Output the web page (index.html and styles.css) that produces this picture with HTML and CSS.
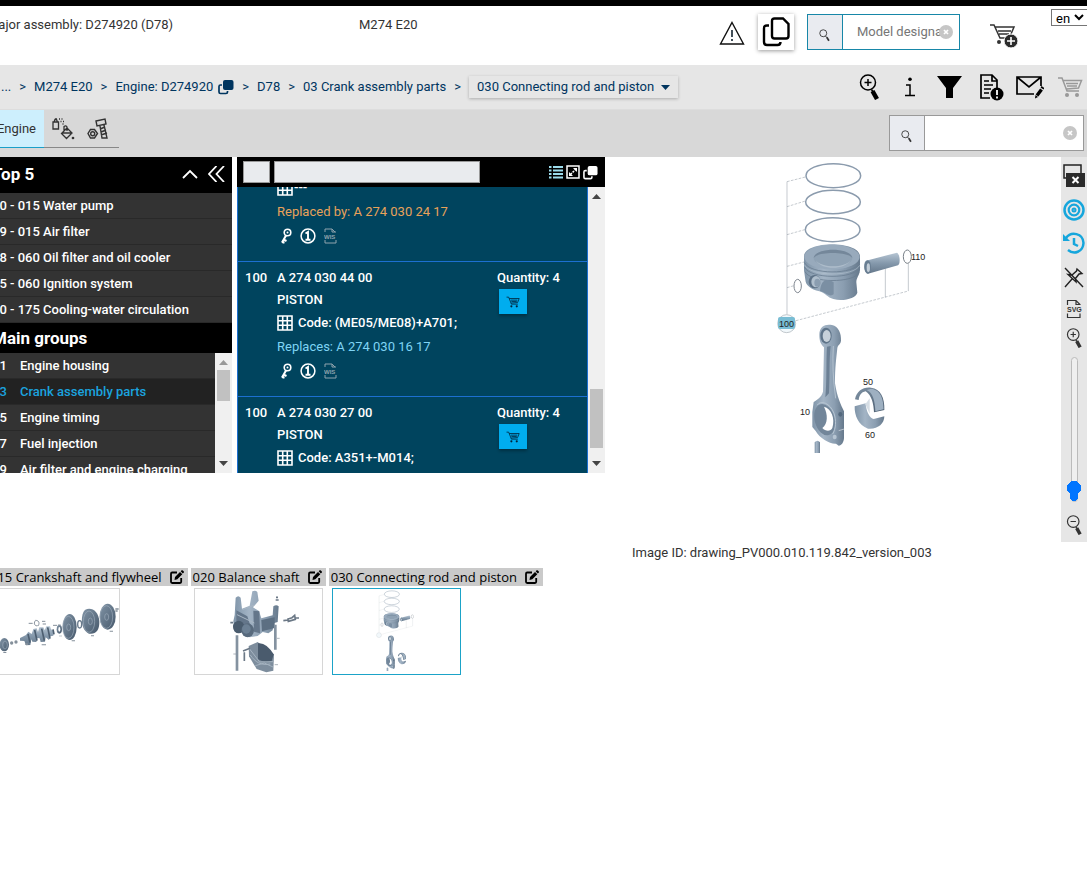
FILE: index.html
```html
<!DOCTYPE html>
<html lang="en">
<head>
<meta charset="utf-8">
<title>Parts catalogue</title>
<link rel="stylesheet" href="styles.css">
</head>
<body>
<svg class="defs" aria-hidden="true">
  <defs>
    <linearGradient id="steel" x1="0" x2="1" y1="0" y2="0"><stop offset="0" stop-color="#7f94a8"/><stop offset=".35" stop-color="#a3b4c5"/><stop offset=".7" stop-color="#8b9eb1"/><stop offset="1" stop-color="#66798c"/></linearGradient>
    <linearGradient id="steelV" x1="0" x2="0" y1="0" y2="1"><stop offset="0" stop-color="#b7c6d4"/><stop offset=".5" stop-color="#8599ac"/><stop offset="1" stop-color="#64778a"/></linearGradient>
    <linearGradient id="dark" x1="0" x2="1" y1="0" y2="1"><stop offset="0" stop-color="#8194a6"/><stop offset="1" stop-color="#46586b"/></linearGradient>
  </defs>
  <symbol id="copy" viewBox="0 0 16 16"><path d="M4 6H2.500Q1 6 1 7.500V13Q1 14.500 2.500 14.500H8Q9.500 14.500 9.500 13V12" fill="none" stroke="currentColor" stroke-width="1.700"/><rect x="5" y="1" width="10.500" height="10" rx="2" fill="currentColor"/></symbol>
  <symbol id="lens" viewBox="0 0 16 16"><circle cx="6" cy="6" r="4" fill="none" stroke="currentColor"/><path d="M8.500 9l1.500 2" stroke="currentColor"/><path d="M10 10.500l2.500 4" stroke="currentColor" stroke-width="2"/></symbol>
  <symbol id="zoomin" viewBox="0 0 20 26"><circle cx="9" cy="8.500" r="7.500" fill="none" stroke="currentColor" stroke-width="1.500"/><path d="M5.500 8.500h7M9 5v7M12.500 15.500l2 3" fill="none" stroke="currentColor" stroke-width="1.500"/><path d="M13.500 17l4.500 8" stroke="currentColor" stroke-width="4.500"/></symbol>
  <symbol id="zoomout" viewBox="0 0 20 26"><circle cx="9" cy="8.500" r="7.500" fill="none" stroke="currentColor" stroke-width="1.500"/><path d="M5.500 8.500h7M12.500 15.500l2 3" fill="none" stroke="currentColor" stroke-width="1.500"/><path d="M13.500 17l4.500 8" stroke="currentColor" stroke-width="4.500"/></symbol>
  <symbol id="cart" viewBox="0 0 26 22"><path d="M1 2h4l5 13h12M6 4.500h18.500l-3 7.500-12 1M9 7.500h12M10 10h10" fill="none" stroke="currentColor" stroke-width="1.500"/><circle cx="10" cy="19" r="2" fill="currentColor"/><circle cx="20" cy="19" r="2" fill="currentColor"/></symbol>
  <symbol id="grid" viewBox="0 0 16 16"><path d="M1 1h14v14H1zM1 5.700h14M1 10.300h14M5.700 1v14M10.300 1v14" fill="none" stroke="currentColor" stroke-width="1.600"/></symbol>
  <symbol id="key" viewBox="0 0 12 16"><circle cx="7.500" cy="4.500" r="3.300" fill="none" stroke="currentColor" stroke-width="1.600"/><circle cx="7.500" cy="4.500" r="1" fill="currentColor"/><path d="M6 7.500L2 14.500M3.500 11.500l3 1.500M2 14l2.500.700" fill="none" stroke="currentColor" stroke-width="2"/></symbol>
  <symbol id="info" viewBox="0 0 16 16"><circle cx="8" cy="8" r="6.900" fill="none" stroke="currentColor" stroke-width="1.500"/><path d="M5.500 5.500L8 4v7.500M5.500 11.700h5" fill="none" stroke="currentColor" stroke-width="1.900"/></symbol>
  <symbol id="file" viewBox="0 0 16 20"><path d="M1.500 6V1.500h8.500l4 4V6M10 1.500V5.500h4M1.500 14.500v4h12.500v-4" fill="none" stroke="currentColor" stroke-width="1.200"/></symbol>
  <symbol id="edit" viewBox="0 0 14 14"><path d="M7 2.500H2.200Q1 2.500 1 3.700V11.800Q1 13 2.200 13H10Q11.200 13 11.200 11.800V8" fill="none" stroke="currentColor" stroke-width="1.800"/><path d="M4.500 10l.5-3L10 2l2.300 2.300-5 5zM10.700 1.300l1-1q.6-.4 1.200.2l.9.900q.5.600 0 1.200l-1 1z" fill="currentColor"/></symbol>
  <symbol id="clear" viewBox="0 0 14 14"><circle cx="7" cy="7" r="7" fill="#c6c6c6"/><path d="M5 5l4 4M9 5l-4 4" stroke="#fff" stroke-width="1.700"/></symbol>
  <symbol id="up" viewBox="0 0 9 5"><path d="M0 5L4.500 0 9 5z" fill="currentColor"/></symbol>
  <symbol id="down" viewBox="0 0 9 5"><path d="M0 0L4.500 5 9 0z" fill="currentColor"/></symbol>

  <symbol id="conrod" viewBox="605 157 456 385">
    <g transform="translate(770 155) scale(.33333)">
      <g fill="none" stroke="#8a939d" stroke-width="1.500"><path d="M51 80V478M346 340V427M415 325V408"/><path stroke-dasharray="8 4" d="M51 80L106 66M51 155L106 138M51 239L104 224M51 334L102 321M51 398L72 392M78 497L415 408"/></g>
      <g fill="none" stroke="#8b9bad" stroke-width="4.500"><ellipse cx="190" cy="62" rx="82" ry="36"/><ellipse cx="189" cy="141" rx="82" ry="35"/><ellipse cx="188" cy="224" rx="82" ry="36"/></g>
      <path d="M102 304C104 256 268 256 270 304V345C268 362 259 368 259 382L262 413C258 430 220 440 190 432C172 428 166 414 148 409C122 402 107 391 106 374L102 345Z" fill="url(#steel)"/>
      <ellipse cx="186" cy="306" rx="83" ry="37" fill="#98aabc"/>
      <ellipse cx="189" cy="309" rx="58" ry="25" fill="#8fa2b4"/><path d="M131 309C136 276 242 276 247 309C236 290 143 289 131 309Z" fill="#74879a"/><path d="M137 316C158 340 222 340 242 316C224 346 154 346 137 316Z" fill="#adbcca"/>
      <g fill="none" stroke="#6b7e91" stroke-width="2.500"><path d="M103 322C120 360 252 360 269 324M103 336C120 373 252 373 269 338M105 350C122 385 250 385 267 353"/></g>
      <path d="M103 329C120 366 252 366 269 331" fill="none" stroke="#b0bfcd" stroke-width="2"/>
      <path d="M150 408C154 372 170 369 191 382V418C179 428 165 412 150 408Z" fill="#7b8fa3"/>
      <ellipse cx="134" cy="380" rx="18" ry="20" fill="#5d7186"/><ellipse cx="138" cy="380" rx="14" ry="17" fill="#b0bfcd"/><ellipse cx="142" cy="383" rx="9" ry="12" fill="#8a9db0"/>
      <ellipse cx="83" cy="393" rx="11" ry="20" fill="none" stroke="#7d858e" stroke-width="3"/>
      <path d="M288 317L381 293C390 298 392 327 384 331L294 356C281 351 280 323 288 317Z" fill="url(#steelV)"/><ellipse cx="293" cy="336" rx="10" ry="20" fill="#697e92"/><ellipse cx="295" cy="338" rx="5" ry="13" fill="#c3ced8"/>
      <ellipse cx="412" cy="305" rx="12" ry="20" fill="none" stroke="#777f87" stroke-width="3"/>
      <circle cx="50" cy="506" r="27" fill="#f2f8fb" stroke="#a5adb4" stroke-width="2"/>
    </g>
    <g transform="translate(770 310) scale(.33333)">
      <path d="M148 74C148 48 167 41 186 45C206 50 214 70 213 92C211 105 204 103 202 114C199 145 195 170 195 220C201 260 213 286 222 304V385C221 397 215 407 206 407L198 401C181 403 149 385 137 363L127 351V306L131 276C142 268 153 264 159 245L162 112C153 103 148 94 148 74Z" fill="url(#steel)"/>
      <path d="M171 110L182 108C177 150 180 204 177 250L166 262C171 215 168 150 171 110Z" fill="#6c8095"/><path d="M190 108C187 155 189 210 197 265" fill="none" stroke="#b4c2cf" stroke-width="3"/>
      <ellipse cx="168" cy="77" rx="17" ry="24" fill="#5f7489"/><ellipse cx="170" cy="78" rx="12" ry="18" fill="#c7d1da"/>
      <ellipse cx="164" cy="329" rx="30" ry="48" transform="rotate(-15 164 329)" fill="#72869a"/><path d="M162 290C184 296 196 325 187 354C181 366 166 364 157 354C174 340 174 314 162 290Z" fill="#fff"/><path d="M142 285C152 270 180 278 192 310C199 331 198 356 188 372" fill="none" stroke="#b7c5d2" stroke-width="3"/>
      <ellipse cx="211" cy="313" rx="6" ry="7" fill="#54697e"/><ellipse cx="194" cy="381" rx="6" ry="7" fill="#b7c5d2"/><path d="M206 362L223 357" stroke="#dce3e9" stroke-width="2"/>
      <path d="M134 397Q142 387 150 397V429H134Z" fill="url(#steel)"/>
      <path d="M255 268C260 242 280 230 303 233C332 237 344 262 343 300L312 307C311 283 305 255 287 244C273 246 268 257 266 270Z" fill="url(#dark)"/><path d="M303 236C336 240 340 273 341 298L316 304C315 276 309 247 290 240Z" fill="#9eb0c1"/>
      <path d="M254 289L287 280C288 304 300 326 311 327L343 319C343 342 322 359 294 356C265 346 253 316 254 289Z" fill="url(#steel)"/><path d="M286 283L299 265V311Z" fill="#d5dde4"/>
    </g>
  </symbol>
</svg>

<div class="app">
  <header class="top">
    <span class="assembly">Major assembly: D274920 (D78)</span>
    <span class="model">M274 E20</span>
    <div class="top-tools">
      <button class="plain" aria-label="Warnings"><svg width="26" height="26" viewBox="0 0 26 26"><path d="M13 2.500L24.500 24H1.500z" fill="none" stroke="#111" stroke-width="1.400"/><path d="M13 10v7M13 19v2" stroke="#23313c" stroke-width="1.700"/></svg></button>
      <button class="raised" aria-label="Copy"><svg width="28" height="30" viewBox="0 0 28 30" fill="none" stroke="#000" stroke-width="2.400"><path d="M12.500 1.500h8.500l5.500 5.500v12q0 2.500-2.500 2.500H12.500Q10 21.500 10 19V4q0-2.500 2.500-2.500zM7 8.500H5Q2 8.500 2 11.500v13.500q0 3 3 3h10.500q3 0 3-3"/></svg></button>
      <div class="search search-top">
        <button aria-label="Search model"><svg width="14" height="14"><use href="#lens"/></svg></button>
        <input type="text" aria-label="Model designation" placeholder="Model designation">
        <svg class="clear" width="14" height="14"><use href="#clear"/></svg>
      </div>
      <button class="plain" aria-label="Add to cart"><svg width="28" height="26" viewBox="0 0 28 26"><g fill="none" stroke="#333" stroke-width="1.500"><path d="M0 2h4l6 13h6M5 4h19l-3 7M8 8h13M9 11h10"/></g><circle cx="9" cy="19" r="2" fill="#333"/><circle cx="21" cy="18" r="7" fill="#2c2c2c" stroke="#fff"/><path d="M17 18h8M21 14v8" stroke="#fff" stroke-width="1.600"/></svg></button>
      <select class="lang" aria-label="Language"><option>en</option></select>
    </div>
  </header>

  <div class="bar">
    <nav class="crumbs" aria-label="Breadcrumb">
      <a href="#">...</a><i>&gt;</i><a href="#">M274 E20</a><i>&gt;</i><a href="#">Engine: D274920</a><svg class="crumb-copy" width="16" height="16"><use href="#copy"/></svg><i>&gt;</i><a href="#">D78</a><i>&gt;</i><a href="#">03 Crank assembly parts</a><i>&gt;</i>
      <button class="crumb-menu">030 Connecting rod and piston <svg width="9" height="5"><use href="#down"/></svg></button>
    </nav>
    <div class="bar-tools">
      <button class="plain" aria-label="Zoom search"><svg width="20" height="26"><use href="#zoomin"/></svg></button>
      <button class="plain" aria-label="Information"><svg width="12" height="20" viewBox="0 0 12 20"><circle cx="6" cy="2.200" r="1.800"/><path d="M2 8h4v10M1 18.500h10" fill="none" stroke="#000" stroke-width="1.500"/></svg></button>
      <button class="plain" aria-label="Filter"><svg width="25" height="22" viewBox="0 0 25 22"><path d="M0 0h25l-9 12v10H9V12z"/></svg></button>
      <button class="plain" aria-label="Document notes"><svg width="25" height="28" viewBox="0 0 25 28"><path d="M11 25H2V2h11l5 5v8M13 2v6h5M5 8h5M5 12h9M5 16h7M5 20h5" fill="none" stroke="#000" stroke-width="1.700"/><circle cx="18" cy="21" r="6.500"/><path d="M18 17v5M18 23.500v2" stroke="#fff" stroke-width="1.800"/></svg></button>
      <button class="plain" aria-label="Message"><svg width="28" height="24" viewBox="0 0 28 24"><path d="M18 19H1V2h24v9M1 2l12 10L25 2" fill="none" stroke="#000" stroke-width="1.700"/><path d="M21 20.500l4.500-6" stroke="#000" stroke-width="3.500"/><path d="M26 13.500l1-1.500" stroke="#000" stroke-width="3.500"/><path d="M19 23.500l.5-3.500 2.500 2z"/></svg></button>
      <button class="plain muted" aria-label="Cart"><svg width="26" height="22"><use href="#cart"/></svg></button>
    </div>
  </div>

  <div class="tabs-row">
    <div class="tabs">
      <button class="tab active">Engine</button>
      <button class="tab" aria-label="Fluids"><svg width="24" height="24" viewBox="0 0 24 24" fill="none" stroke="#333" stroke-width="1.300"><path d="M2 5h5.500v7H2zM3 5l1-2.500h1.500l1 2.500M4 2h2"/><path d="M8 2h1M10.500 2h1M9.500 4.500h1M12 4.500h1M11.500 7h1" stroke-width="1.400"/><path d="M16 11l5 5-5.500 5.500-5-5zM11 16h9M13 14V9.500q2-1.500 3 .5v4"/><circle cx="22" cy="21" r=".7"/></svg></button>
      <button class="tab" aria-label="Standard parts"><svg width="22" height="22" viewBox="0 0 22 22" fill="none" stroke="#333" stroke-width="1.400"><path d="M9 3l9-2 1 5-9 2zM13 8l2 12h5L17 7M13 11l5-2M14 14l5-2M14 17l6-2"/><path d="M3.500 11.500h4l3 4-3 4.500h-4L1 15.500z"/><circle cx="5.700" cy="15.700" r="2"/></svg></button>
    </div>
    <div class="search search-parts">
      <button aria-label="Search parts"><svg width="14" height="14"><use href="#lens"/></svg></button>
      <input type="text" aria-label="Search term">
      <svg class="clear" width="14" height="14"><use href="#clear"/></svg>
    </div>
  </div>

  <main class="work">
    <aside class="groups">
      <div class="groups-head"><h2>Top 5</h2><svg width="16" height="10" viewBox="0 0 16 10"><path d="M1 9l7-7 7 7" fill="none" stroke="#fff" stroke-width="1.800"/></svg><svg width="17" height="16" viewBox="0 0 17 16"><path d="M8.500 0L1 8l7.500 8M16 0L8.500 8l7.500 8" fill="none" stroke="#fff" stroke-width="1.800"/></svg></div>
      <ul class="rows top5">
        <li>20 - 015 Water pump</li><li>09 - 015 Air filter</li><li>18 - 060 Oil filter and oil cooler</li><li>15 - 060 Ignition system</li><li>20 - 175 Cooling-water circulation</li>
      </ul>
      <div class="groups-head sub"><h2>Main groups</h2></div>
      <div class="scroller groups-list">
        <ul class="rows main-rows">
          <li><b>01</b>Engine housing</li><li class="current"><b>03</b>Crank assembly parts</li><li><b>05</b>Engine timing</li><li><b>07</b>Fuel injection</li><li><b>09</b>Air filter and engine charging</li>
        </ul>
        <div class="scrollbar near-top"><svg class="faint" width="9" height="5"><use href="#up"/></svg><span class="thumb"></span><svg width="9" height="5"><use href="#down"/></svg></div>
      </div>
    </aside>

    <section class="parts">
      <div class="parts-head">
        <input class="short" type="text" aria-label="Position"><input class="long" type="text" aria-label="Part number">
        <div class="parts-tools">
          <svg width="14" height="14" viewBox="0 0 14 14"><path d="M4 2h10M4 5.500h10M4 9h10M4 12.500h10M0 2h2.500M0 5.500h2.500M0 9h2.500M0 12.500h2.500" stroke="#9cdcec" stroke-width="1.800"/></svg>
          <svg width="14" height="14" viewBox="0 0 14 14"><path d="M1 1h12v12H1z" fill="none" stroke="#fff" stroke-width="1.500"/><path d="M7 3h4v4zM3 7v4h4z" fill="#fff"/><path d="M4.500 9.500l5-5" stroke="#fff" stroke-width="1.500" stroke-dasharray="2 1"/></svg>
          <svg width="15" height="15"><use href="#copy"/></svg>
        </div>
      </div>
      <div class="scroller parts-list">
        <div class="cards">
          <article class="card">
            <span class="pos">100</span>
            <div class="desc"><p>A 274 030 16 17</p><p>PISTON</p><p class="code"><svg width="16" height="16"><use href="#grid"/></svg><span class="dashes">---</span></p><p class="tall replaced">Replaced by: A 274 030 24 17</p><p class="tall marks"><svg width="12" height="16"><use href="#key"/></svg><svg width="16" height="16"><use href="#info"/></svg><svg class="wis" width="14" height="16" viewBox="0 0 14 16"><path d="M1 4V1h7l3 3M8 1v3h4M1 12v3h11v-3" fill="none" stroke="currentColor"/><text x="0" y="11">WIS</text></svg></p></div>
            <div class="qty">Quantity: 4<button aria-label="Add to cart"><svg width="14" height="12"><use href="#cart"/></svg></button></div>
          </article>
          <article class="card">
            <span class="pos">100</span>
            <div class="desc"><p>A 274 030 44 00</p><p>PISTON</p><p class="code"><svg width="16" height="16"><use href="#grid"/></svg>Code: (ME05/ME08)+A701;</p><p class="tall replaces">Replaces: A 274 030 16 17</p><p class="tall marks"><svg width="12" height="16"><use href="#key"/></svg><svg width="16" height="16"><use href="#info"/></svg><svg class="wis" width="14" height="16" viewBox="0 0 14 16"><path d="M1 4V1h7l3 3M8 1v3h4M1 12v3h11v-3" fill="none" stroke="currentColor"/><text x="0" y="11">WIS</text></svg></p></div>
            <div class="qty">Quantity: 4<button aria-label="Add to cart"><svg width="14" height="12"><use href="#cart"/></svg></button></div>
          </article>
          <article class="card">
            <span class="pos">100</span>
            <div class="desc"><p>A 274 030 27 00</p><p>PISTON</p><p class="code"><svg width="16" height="16"><use href="#grid"/></svg>Code: A351+-M014;</p></div>
            <div class="qty">Quantity: 4<button aria-label="Add to cart"><svg width="14" height="12"><use href="#cart"/></svg></button></div>
          </article>
        </div>
        <div class="scrollbar near-end"><svg width="9" height="5"><use href="#up"/></svg><span class="thumb"></span><svg width="9" height="5"><use href="#down"/></svg></div>
      </div>
    </section>

    <section class="viewer">
      <svg class="drawing" width="456" height="385" viewBox="605 157 456 385">
        <use href="#conrod" x="605" y="157" width="456" height="385"/>
        <rect x="778" y="317" width="17" height="12" rx="2" fill="#79bdd4"/>
        <g class="callout"><text x="911" y="260">110</text><text x="779" y="327">100</text><text x="800" y="415">10</text><text x="863" y="385">50</text><text x="865" y="438">60</text></g>
      </svg>
      <p class="caption">Image ID: drawing_PV000.010.119.842_version_003</p>
    </section>

    <aside class="view-tools">
      <button class="plain" aria-label="Close window"><svg width="22" height="24" viewBox="0 0 22 24"><path d="M1 1h17v13H1z" fill="none" stroke="#222" stroke-width="1.500"/><path d="M3 9h19v14H3z" fill="#2b2b2b"/><path d="M9.500 13l6 6M15.500 13l-6 6" stroke="#fff" stroke-width="2"/></svg></button>
      <button class="plain" aria-label="Hotspots"><svg width="22" height="22" viewBox="0 0 22 22" fill="none" stroke="#16a6dc"><circle cx="11" cy="11" r="9.500" stroke-width="2.500"/><circle cx="11" cy="11" r="5.300" stroke-width="2.200"/><circle cx="11" cy="11" r="1.500" stroke-width="2"/></svg></button>
      <button class="plain" aria-label="History"><svg width="22" height="22" viewBox="0 0 22 22" fill="none" stroke="#16a6dc" stroke-width="2.500"><path d="M3 6C8-1 20 1 20.500 11C20 20 11 23 5 18M11 6v6l4 2"/><path d="M0 2v7h7z" fill="#16a6dc" stroke="none"/></svg></button>
      <button class="plain" aria-label="Unpin"><svg width="20" height="21" viewBox="0 0 20 21" fill="none" stroke="#222" stroke-width="1.400"><path d="M1 1l18 19M1 20l7-8M13 2l5 4.500-3 .5-3.500 4.500.5 3.500-8-7.500 4 .5L12.500 4z"/></svg></button>
      <button class="plain" aria-label="Export SVG"><svg class="svg-file" width="16" height="20"><use href="#file"/><text x="1" y="13">SVG</text></svg></button>
      <button class="plain grey" aria-label="Zoom in"><svg width="16" height="20"><use href="#zoomin"/></svg></button>
      <input class="zoom-range" type="range" aria-label="Zoom" min="0" max="100" value="0">
      <button class="plain grey" aria-label="Zoom out"><svg width="16" height="20"><use href="#zoomout"/></svg></button>
    </aside>
  </main>

  <section class="thumbs">
    <figure>
      <figcaption>015 Crankshaft and flywheel <svg width="14" height="14"><use href="#edit"/></svg></figcaption>
      <a href="#" class="thumb-box" aria-label="Crankshaft and flywheel"><svg viewBox="-18 87 381 255">
        <g fill="url(#dark)"><ellipse cx="19" cy="254" rx="14" ry="20"/><ellipse cx="184" cy="208" rx="8" ry="13"/><ellipse cx="215" cy="201" rx="21" ry="39"/><path d="M262 149C280 140 302 153 304 184C305 213 292 224 273 221C245 208 248 159 262 149z"/><ellipse cx="329" cy="170" rx="24" ry="39"/></g>
        <g fill="none" stroke="#9cabb9" stroke-width="2"><ellipse cx="21" cy="255" rx="7" ry="12"/><ellipse cx="211" cy="202" rx="17" ry="33"/><ellipse cx="212" cy="202" rx="6" ry="10"/><ellipse cx="273" cy="185" rx="17" ry="32"/><ellipse cx="277" cy="184" rx="6" ry="10"/><ellipse cx="325" cy="171" rx="19" ry="34"/><ellipse cx="326" cy="171" rx="6" ry="10"/></g>
        <ellipse cx="184" cy="208" rx="3" ry="7" fill="#fff"/><ellipse cx="245" cy="193" rx="6" ry="11" fill="none" stroke="#697a8c" stroke-width="4"/>
        <path d="M66 234L84 225 91 215 101 222 106 207 116 205 120 216 124 202 136 202 140 211 145 199 156 199 159 208 167 212 166 227 157 229 153 240 143 232 141 245 128 246 125 235 118 234 115 246 103 245 100 238 97 255 84 256 79 243 66 242z" fill="url(#steelV)"/>
        <g stroke="#4c5e70" stroke-width="5" fill="none"><path d="M90 222l6 26M110 210l7 32M131 206l8 36M149 202l7 34M165 208l3 15"/></g>
        <g fill="#85909b"><circle cx="41" cy="249" r="5"/><circle cx="54" cy="246" r="5"/><path d="M82 250h8v5h-8zM131 253h13v3h-13zM16 276h9v3h-9zM183 227h9v2h-9zM221 241h10v3h-10zM279 226h9v3h-9zM335 212h10v3h-10zM352 145h10v4h-10zM352 151h7v4h-7z"/></g><path d="M92 190h12M132 184h10M134 192h10M112 182c-7 10 0 17 7 15M112 181c14 0 12 12 8 17M165 196h12M180 195h8" fill="none" stroke="#85909b" stroke-width="3"/>
      </svg></a>
    </figure>
    <figure>
      <figcaption>020 Balance shaft <svg width="14" height="14"><use href="#edit"/></svg></figcaption>
      <a href="#" class="thumb-box" aria-label="Balance shaft"><svg viewBox="582 87 381 255">
        <path d="M704 113q8-9 15 0l4 33 23-9 8-43q9-5 15 2l4 26-17 20 18 11 7 22 34-9 2-27q9-7 16 0l-3 47-12 4-3 21-13 9-17-4-15 12-24 4-37-22-9 3-3-29 4-19z" fill="url(#steel)"/>
        <path d="M757 152l18 2 2 66-18-5zM706 151l33 18 17 53-50-40z" fill="#64768a"/><ellipse cx="713" cy="201" rx="17" ry="19" fill="#4a5c6e"/><ellipse cx="740" cy="211" rx="19" ry="21" fill="#586a7d"/><ellipse cx="736" cy="207" rx="13" ry="14" fill="#6c8094"/>
        <path d="M781 180l40-8v32l-38 10z" fill="#5c6f82"/><path d="M724 149l37-14M708 164l52 25" stroke="#a9b7c4" stroke-width="3"/>
        <path d="M704 226h8v106h-8zM819 194h8v75h-8z" fill="#8492a0"/><path d="M743 258l27-12 49 38-2 48-21 5-29-10-23-38z" fill="#7d8d9d"/><path d="M771 250q24-4 47 33l-6 20q-24 6-41-5z" fill="#4a5b6d"/><path d="M745 266l31 40 40-1M748 285c15 22 32 32 60 27M763 317l27-8 26 12" fill="none" stroke="#a5b3c0" stroke-width="3"/><path d="M847 182l15-2M861 177l12-4 8-7 2 12-21 6zM884 174h10M726 273l21-8M730 277v26M824 120h9M825 112h6M688 188h8" fill="none" stroke="#6b7886" stroke-width="5"/><path d="M828 235h8M697 282h8M821 314h10" stroke="#85909b" stroke-width="2"/>
      </svg></a>
    </figure>
    <figure>
      <figcaption>030 Connecting rod and piston <svg width="14" height="14"><use href="#edit"/></svg></figcaption>
      <a href="#" class="thumb-box selected" aria-label="Connecting rod and piston"><svg viewBox="621 157 458 307"><use href="#conrod" x="605" y="157" width="456" height="385"/></svg></a>
    </figure>
  </section>
</div>
</body>
</html>
```

FILE: styles.css
```css
* { box-sizing: border-box; }
body { margin: 0; overflow: hidden; background: #fff; color: #333; font: 13px/20px Roboto, "Liberation Sans", sans-serif; }
svg { display: block; flex: none; }
button, input, select { font: inherit; color: inherit; margin: 0; border-radius: 0; }
button { padding: 0; border: 0; background: none; display: flex; align-items: center; justify-content: center; }
a { color: inherit; text-decoration: none; }
p, h2, ul, figure { margin: 0; padding: 0; }
ul { list-style: none; }
.defs { position: absolute; width: 0; height: 0; }

/* The page is wider than the window and sits scrolled to the right. */
.app { margin-left: -16px; border-top: 6px solid #000; }

.top { display: flex; height: 59px; align-items: flex-start; }
.assembly, .model { padding-top: 9px; white-space: nowrap; }
.assembly { flex: 0 0 375px; padding-left: 3px; }
.top-tools { display: flex; margin-left: auto; align-items: flex-start; padding-top: 8px; }
.top-tools .plain { height: 38px; margin-right: 13px; }
.raised { width: 36px; height: 36px; margin-right: 13px; background: #fff; box-shadow: 0 1px 4px rgba(0,0,0,.4); }
.search { display: flex; position: relative; height: 36px; border: 1px solid #999; background: #fff; }
.search button { width: 35px; background: #e9ebf0; border-right: 1px solid #999; color: #333; padding-top: 5px; }
.search input { flex: 1; min-width: 0; width: 100%; border: 0; padding: 0 14px; background: none; }
.search input::placeholder { color: #767676; opacity: 1; }
.clear { position: absolute; right: 6px; top: 10px; }
.search-top { width: 153px; margin-right: 30px; border-color: #1787a8; }
.search-top button { border-color: #1787a8; }
.search-top input { padding-right: 14px; }
.top-tools .search-top + .plain { margin-right: 33px; padding-top: 5px; }
.lang { width: 37px; height: 17px; margin: -5px -1px 0 0; padding: 0; border: 1px solid #767676; background: #fff; color: #000; }

.bar { display: flex; height: 45px; align-items: center; background: #e6e6e6; border-bottom: 1px solid #ddd; color: #00355f; }
.crumbs { display: flex; align-items: center; padding-left: 17px; white-space: nowrap; }
.crumbs i { font-style: normal; margin: 0 8px; }
.crumb-copy { margin-left: 5px; }
.crumb-menu { height: 22px; padding: 0 8px; gap: 7px; box-shadow: 0 1px 3px rgba(0,0,0,.25); }
.bar-tools { display: flex; align-items: center; margin-left: auto; padding-right: 4px; color: #000; }
.bar-tools .plain { margin-left: 13px; }
.bar-tools .plain:nth-child(2) { margin-left: 25px; }
.bar-tools .plain:nth-child(3) { margin-left: 21px; }
.bar-tools .plain:nth-child(4) { margin-left: 17px; }
.bar-tools .plain:nth-child(5) { margin-left: 12px; }
.bar-tools .muted { color: #999; }

.tabs-row { display: flex; height: 47px; justify-content: space-between; background: #d8d8d8; }
.tabs { display: flex; height: 38px; padding-left: 8px; }
.tab { border-bottom: 1px solid #888; width: 37px; }
.tab.active { width: 52px; padding-right: 8px; justify-content: flex-end; background: #cdeffd; border-color: #1a9fc8; }
.tab:last-child { width: 38px; padding-right: 4px; }
.search-parts { width: 195px; margin: 5px 3px 0 0; }

.work { display: flex; align-items: flex-start; height: 411px; }
.groups { width: 248px; background: #333; color: #fff; font-weight: 500; }
.groups-head { display: flex; height: 36px; align-items: center; gap: 10px; padding: 0 7px 2px 8px; background: #000; }
.groups-head.sub { height: 30px; padding-bottom: 0; }
.groups-head h2 { margin-right: auto; font-size: 17px; }
.rows li { height: 26px; line-height: 25px; padding-left: 8px; border-bottom: 1px solid #292929; white-space: nowrap; }
.main-rows { flex: 1; overflow: hidden; }
.main-rows b { display: inline-block; width: 28px; font-weight: 500; }
.main-rows .current { background: #222; color: #1ba3df; }
.scroller { display: flex; overflow: hidden; }
.groups-list { height: 120px; }
.scrollbar { display: flex; flex-direction: column; align-items: center; width: 17px; padding: 7px 0; background: #f0f0f0; color: #444; }
.scrollbar .faint { color: #999; }
.thumb { width: 13px; background: #c1c1c1; }
.near-top .thumb { height: 31px; margin: 5px 0 auto; }
.near-end .thumb { height: 59px; margin: auto 0 13px; }

.parts { width: 368px; margin-left: 5px; }
.parts-head { display: flex; height: 30px; align-items: center; gap: 4px; padding: 0 7px 0 6px; background: #000; }
.parts-head input { height: 22px; border: 1px solid #999; background: #e9ebee; }
.short { width: 27px; }
.long { width: 206px; }
.parts-tools { display: flex; gap: 3px; margin-left: auto; color: #fff; }
.parts-list { height: 286px; }
.cards { flex: 1; margin-top: -61px; background: #00445e; border: solid #1c6fd0; border-width: 0 1px; color: #fff; font-weight: 500; }
.card { display: grid; grid-template-columns: 32px 1fr 84px; height: 135px; padding: 5px 6px 0 7px; border-top: 1px solid #1c6fd0; line-height: 22px; }
.code, .marks { display: flex; align-items: center; height: 24px; gap: 5px; }
.dashes { margin-left: -4px; }
.tall { height: 24px; line-height: 24px; }
.marks { gap: 8px; padding-left: 3px; }
.replaced { color: #e8a25a; font-weight: 400; }
.replaces { color: #7fd4f5; font-weight: 400; }
.wis { color: #8fa3ad; }
.wis text { font: 700 6px "Liberation Sans", sans-serif; fill: currentColor; }
.qty button { width: 28px; height: 25px; margin-left: 2px; background: #00adef; color: #00243a; box-shadow: 0 2px 3px rgba(0,0,0,.3); }

.viewer { flex: 1; min-width: 0; }
.drawing { margin: 0 auto; }
.callout { font: 9px "Liberation Sans", sans-serif; fill: #222; }
.caption { padding: 1px 0 0 27px; }
.view-tools { display: flex; flex-direction: column; align-items: center; width: 26px; height: 385px; padding: 7px 0; background: #e6e6e6; }
.view-tools .plain { margin-bottom: 11px; }
.view-tools .plain:nth-child(3) { margin-bottom: 13px; }
.view-tools .plain:nth-child(5) { margin-bottom: 9px; }
.view-tools .plain.grey { margin: 0; color: #333; }
.svg-file text { font: 700 7px "Liberation Sans", sans-serif; fill: #333; }
.zoom-range { flex: 1; width: 19px; min-height: 0; margin: 9px 0 13px; writing-mode: vertical-lr; direction: rtl; appearance: none; background: none; }
.zoom-range::-webkit-slider-runnable-track { width: 7px; height: 100%; border: 1px solid #bbb; border-radius: 4px; background: #efefef; }
.zoom-range::-webkit-slider-thumb { appearance: none; width: 14px; height: 20px; margin-left: -5px; background: radial-gradient(circle at 7px 7px, #0075ff 7px, transparent 7px), radial-gradient(circle at 7px 16px, #0075ff 4px, transparent 4px), linear-gradient(#0075ff, #0075ff) 3px 7px / 8px 9px no-repeat; }

.thumbs { display: flex; gap: 3px; padding-left: 4px; color: #000; font: 13px/18px "Open Sans", "Noto Sans", sans-serif; }
.thumbs figcaption { display: flex; align-items: center; gap: 8px; height: 18px; padding: 0 4px 0 2px; background: #cacaca; white-space: nowrap; }
.thumb-box { display: block; width: 129px; height: 87px; margin: 2px 0 0 3px; border: 1px solid #d6d6d6; }
.thumb-box svg { width: 100%; height: 100%; }
.thumb-box.selected { border-color: #1ba3c8; }
```
